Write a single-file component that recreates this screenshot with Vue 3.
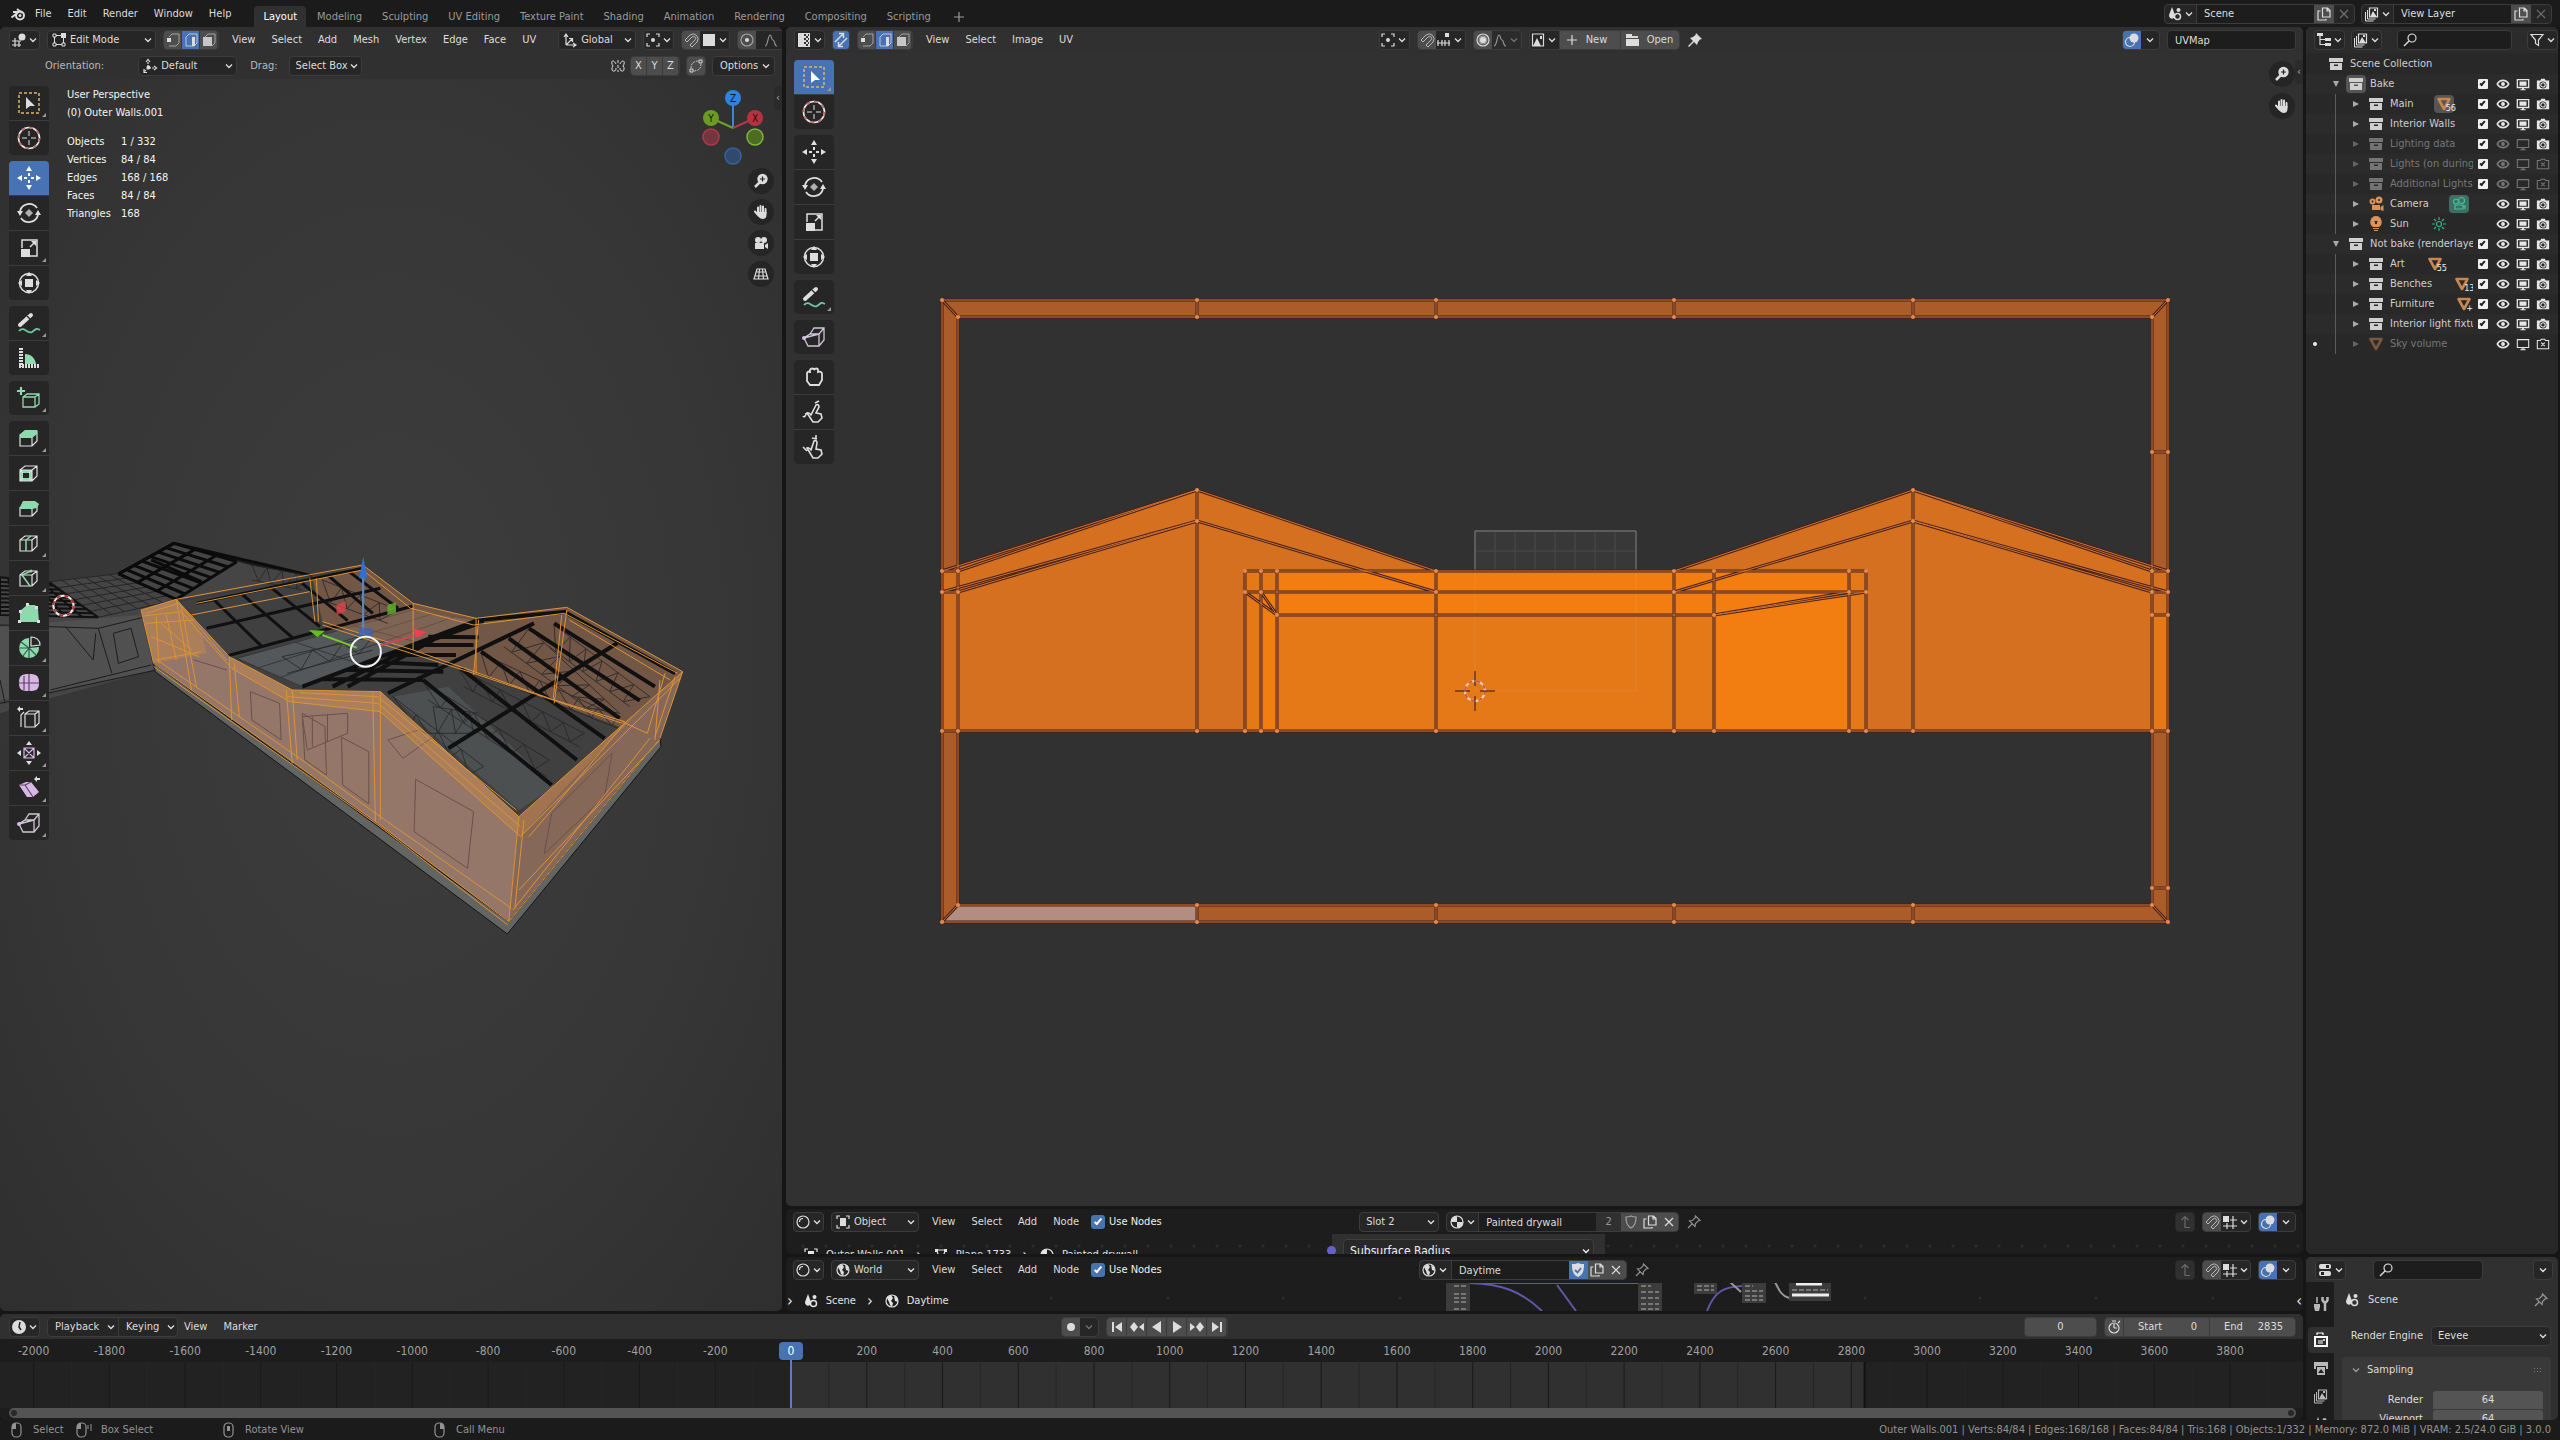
<script setup>
import { h } from 'vue'

const L = 'fill="none"'
const S = 'fill="none" stroke="currentColor"'
const F = 'fill="currentColor"'
const CUBE = 'M3 9l5-4h12v10l-5 5H3zM3 9h12v11M15 9l5-4'

const glyphs = {
  chev: `<path ${S} d="M4 6l4 4 4-4" stroke-width="1.800"/>`,
  blender: `<path ${S} stroke-width="2" d="M1.500 11.500L8 6.500M3 6h6M7 3l5 4"/><circle ${S} stroke-width="2" cx="10" cy="9.500" r="4"/><circle ${F} cx="10" cy="9.500" r="1.500"/>`,
  view3d: `<path ${S} d="M1 9h9M1 13h9M4 6v9M8 9v6"/><circle ${F} cx="11" cy="5" r="3.500"/>`,
  uvedit: `<path ${F} d="M2 1h12v14H2z"/><path fill="#222" d="M8 2h2v2H8zM12 2h1v2h-1zM10 4h2v2h-2zM8 6h2v2H8zM12 6h1v2h-1zM10 8h2v2h-2zM8 10h2v2H8zM12 10h1v2h-1zM10 12h2v2h-2z" opacity=".9"/>`,
  editmode: `<path ${S} d="M5 3.500h5M3.500 5v6M5 12.500h6M12.500 6v5" stroke-width="1"/><path ${S} stroke-width="1" d="M2 2h3v3H2zM2 11h3v3H2zM11 11h3v3h-3z"/><path ${F} d="M10 1h5v5h-5z"/>`,
  vert: `<path ${S} stroke-width="1" opacity=".6" d="M4 5l3-3h7v9l-3 3H4"/><path ${F} d="M2 6h4v4H2z"/>`,
  edge: `<path ${S} stroke-width="1" opacity=".8" d="M3 5l3-3h8v9l-3 3H3z"/><path ${F} d="M9 5h3v9H9z"/>`,
  face: `<path ${S} stroke-width="1" opacity=".6" d="M4 5l3-3h7v9l-3 3"/><path ${F} opacity=".85" d="M2 5h9v9H2z"/>`,
  axes: `<path ${S} d="M4 13V3M2 5l2-3 2 3M4 13h9M11 11l3 2-3 2M4 13l6-6M7 6.500h3.500V10"/>`,
  orient: `<path ${S} stroke-dasharray="2 1" d="M6 9V3M7 10h6M6 10l-4 4"/><path ${S} d="M4 4l2-2.500L8 4M12 8l2.500 2-2.500 2M2 11v3.500h3"/><circle ${F} cx="6.500" cy="9.500" r="2"/>`,
  pivot: `<path ${S} d="M2 5V2h3M11 2h3v3M14 11v3h-3M5 14H2v-3"/><circle ${F} cx="8" cy="8" r="2"/>`,
  magnet: `<path ${S} stroke-width="1" opacity=".75" d="M2 8l5-5a5 5 0 017 7l-5 5-2-2 5-5a2 2 0 00-3-3L4 10z"/>`,
  snapface: `<path ${F} d="M2 2h12v12H2z"/>`,
  snapinc: `<path ${S} d="M1 11h13M2 8v6M6 8v6M9 8v6M13 8v6"/><path ${F} d="M9 1h4v4H9z"/>`,
  snapgrid: `<path ${S} d="M1 12h14M8 6h7M5 9v6M11 2v13"/><path ${F} d="M1 2h6v6H1z"/>`,
  prop: `<circle ${S} opacity=".6" cx="8" cy="8" r="6"/><circle ${F} cx="8" cy="8" r="2"/>`,
  prop2: `<circle ${S} cx="8" cy="8" r="6"/><circle ${F} opacity=".5" cx="8" cy="8" r="4.500"/><circle ${F} cx="8" cy="8" r="3"/>`,
  falloff: `<path ${S} opacity=".6" d="M2 14c3 0 3-11 5-11s1 5 3 5 1 6 4 6"/>`,
  mirror: `<path ${S} stroke-width="1" d="M8 2v3M8 7v3M8 12v2M6 6C3 0 0 4 3 8c-2 2-1 6 1 5 2 0 2-2 2-3M10 6c3-6 6-2 3 2 2 2 1 6-1 5-2 0-2-2-2-3"/>`,
  automerge: `<path ${S} stroke-width="1" opacity=".8" stroke-dasharray="2 1" d="M3 10c0-5 3-7 8-7M13 6c0 5-3 7-8 7"/><path ${S} stroke-width="1" d="M2 11h3v3H2zM11 2h3v3h-3z"/>`,
  sync: `<path ${S} stroke-width="1.500" d="M2 10l8-8M6 1.500h4.500V6M14 6l-8 8M5.500 10v4.500H10"/>`,
  image: `<path ${S} d="M2.500 2h11v12h-11z"/><path ${F} d="M3 14l4-8 4 8zM10 4h2v3h-2z"/>`,
  plus: `<path ${S} d="M8 3v10M3 8h10"/>`,
  folder: `<path ${F} d="M1 2h6v2h6v2H1zM1 7h13v7H1z"/>`,
  pinfull: `<path ${F} d="M9 1l6 6-2 .5-2 2.500-1 3-3-3-5 5-1-1 5-5-3-3 3-1 2.500-2z"/>`,
  pin: `<path ${S} d="M9.500 2l4.500 4.500-2 .5-2.500 2.500-.5 3-5.500-5.500 3-.5L9 4zM6 10l-4 4"/>`,
  overlay: `<circle ${F} cx="10" cy="6" r="4.500"/><circle ${S} cx="6" cy="10" r="4.500"/>`,
  scene: `<path ${F} d="M5 1l3 8c0 5-6 5-6 0z"/><circle ${S} stroke-width="1.500" cx="10.500" cy="10.500" r="3"/><circle ${F} cx="11.500" cy="4" r="2"/>`,
  layers: `<path ${S} d="M5.500 2h8v9h-8z"/><path ${F} d="M6 11l3-6 4 6zM10 3h2v2h-2z"/><path ${S} stroke-width="1" d="M3.500 4v9h8M1.500 6v9h8"/>`,
  copy: `<path ${S} d="M6.500 2h5l2.500 2.500V11H6.500zM11 2v3h3M4.500 5H2v9h8v-1"/>`,
  x: `<path ${S} d="M4 4l8 8M12 4l-8 8"/>`,
  tree: `<path ${F} d="M1 1h6v3H1zM9 6h6v3H9zM9 11h6v3H9z"/><path ${S} d="M4 4v8.500h5M4 7.500h5"/>`,
  search: `<circle ${S} cx="10" cy="6" r="4"/><path ${S} stroke-width="1.500" d="M7 9l-5 5"/>`,
  filter: `<path ${S} d="M2 2.500h12L9.500 8v5.500l-3-2V8z"/>`,
  coll: `<path ${F} d="M1 2h14v4H1z"/><path ${F} fill-rule="evenodd" d="M2 7h12v7H2zM6 8.500v1.500h4V8.500z"/>`,
  eye: `<path ${S} stroke-width="1.800" d="M1.500 8c3-5.500 10-5.500 13 0-3 5.500-10 5.500-13 0z"/><circle ${F} cx="8" cy="8" r="2.200"/>`,
  screen: `<path ${S} stroke-width="1.500" d="M1.500 3h13v9h-13z"/><path ${F} d="M4 5h8v5H4zM5 14h6v1H5zM7 12h2v2H7z"/>`,
  screenoff: `<path ${S} d="M1.500 3h13v9h-13zM5 14.500h6M7 12v2M9 12v2"/>`,
  cam: `<path ${F} fill-rule="evenodd" d="M1 4h4l1-2h4l1 2h4v10H1zM8 5a4 4 0 100 8 4 4 0 000-8z"/><circle ${S} cx="8" cy="9" r="2.500"/>`,
  camoff: `<path ${S} d="M1.500 4H5l1-1.500h4L11 4h3.500v9.500h-13zM6 6.500l4 4M10 6.500l-4 4"/>`,
  movie: `<circle ${F} cx="4.500" cy="5.500" r="3"/><circle ${F} cx="11" cy="4" r="3.500"/><path ${F} d="M4 9h8v5H4zM12.500 11l3-2v6l-3-1z"/><circle cx="4.500" cy="5.500" r="1" fill="#282828"/><circle cx="11" cy="4" r="1" fill="#282828"/>`,
  movieo: `<circle ${S} cx="5" cy="5.500" r="2.500"/><circle ${S} cx="10.500" cy="4.500" r="3"/><path ${S} d="M4 9h8v4H4zM12 11l2-1v3"/>`,
  bulb: `<path ${F} fill-rule="evenodd" d="M8 0a6 6 0 00-3 11h6A6 6 0 008 0zM6 5l1 1v2h2V6l1-1"/><path ${S} d="M5 12.500h6M6 14.500h4"/>`,
  sun: `<circle ${S} cx="8" cy="8" r="2.500"/><path ${S} d="M8 1v3M8 12v3M1 8h3M12 8h3M3 3l2 2M11 11l2 2M13 3l-2 2M5 11l-2 2"/>`,
  mesh: `<path ${S} stroke-width="2.600" stroke-linejoin="round" d="M2.500 3h11L8 13z"/>`,
  shader: `<circle ${S} cx="8" cy="8" r="6"/><path ${S} d="M4.500 8A3.500 3.500 0 018 4.500"/>`,
  object: `<path ${S} d="M2 5V2h3M11 2h3v3M14 11v3h-3M5 14H2v-3"/><path ${F} d="M5 4h6v8H5z"/>`,
  world: `<circle ${S} cx="8" cy="8" r="6"/><path ${F} d="M3 5l4-3 2 3-2 3 2 2-1 4-2-2-1-3zM10 3l3 2 1 4-3-1z"/>`,
  material: `<circle ${S} cx="8" cy="8" r="6"/><path ${F} d="M8 2v6H2a6 6 0 016-6zM8 8h6a6 6 0 01-6 6z"/>`,
  meshdata: `<path ${S} d="M3 3h10M4 4l3 9M12 4L9 13"/><path ${F} d="M2 2h3v3H2zM11 2h3v3h-3z"/>`,
  shield: `<path ${S} d="M8 2c2 1 3 1 5 1 0 6-1 9-5 11C4 12 3 9 3 3c2 0 3 0 5-1z"/>`,
  shieldon: `<path ${F} d="M8 1c2 1 4 1 6 1 0 7-1 11-6 13C3 13 2 9 2 2c2 0 4 0 6-1z"/><path d="M5 8l2.500 2.500L11 6" stroke="#4772b3" stroke-width="1.800" fill="none"/>`,
  up: `<path ${S} d="M13 13.500H8V3M4.500 6L8 2.500 11.500 6"/>`,
  clock: `<circle ${F} cx="8" cy="8" r="7"/><path stroke="#222" stroke-width="1.500" fill="none" d="M9 3L8 8l2 3"/>`,
  stop: `<circle ${S} cx="8" cy="9" r="5"/><path ${S} d="M8 9V5M8 9h3M6 2h4M12 4l2-2"/>`,
  rec: `<circle ${F} cx="8" cy="8" r="4"/>`,
  first: `<path ${F} d="M3 3h2v10H3zM13 3v10L6 8z"/>`,
  prevkey: `<path ${F} d="M5 3l4 5-4 5-4-5zM15 4v8l-5-4z"/>`,
  playback: `<path ${F} d="M12 2v12L3 8z"/>`,
  play: `<path ${F} d="M4 2v12l9-6z"/>`,
  nextkey: `<path ${F} d="M11 3l4 5-4 5-4-5zM1 4v8l5-4z"/>`,
  last: `<path ${F} d="M11 3h2v10h-2zM3 3v10l7-5z"/>`,
  props: `<rect ${F} x="2" y="2" width="12" height="5" rx="2"/><rect ${F} x="2" y="9" width="12" height="5" rx="2"/><path fill="#222" d="M9 3h3v3H9zM4 10h3v3H4z"/>`,
  tools: `<path ${S} stroke-width="1.500" d="M4 1v6"/><path ${S} stroke-width="2.500" d="M12 7v8M9.500 1v3c1 3 4 3 5 0V1"/><path ${F} d="M1 8h6v3l-1 4H2l-1-4z"/>`,
  render: `<path ${F} fill-rule="evenodd" d="M1 4h14v11H1zM3 6v7h10V6z"/><path ${S} d="M4 3V1h6v2M5 9h5M5 11h5"/><circle ${F} cx="11" cy="8" r="1"/>`,
  output: `<path ${F} d="M1 2h14v7h-2V6H3v3H1zM4 7h8v8H4z"/><path fill="#222" d="M5 13l3-4 3 4z"/>`,
  mouseL: `<rect ${S} x="4" y="1" width="9" height="14" rx="4"/><path ${F} d="M4 7V5a4 4 0 014-4v6z"/>`,
  mouseM: `<rect ${S} x="4" y="1" width="9" height="14" rx="4"/><path ${F} d="M7 4h3v5H7z"/>`,
  mouseR: `<rect ${S} x="4" y="1" width="9" height="14" rx="4"/><path ${F} d="M13 7V5a4 4 0 00-4-4v6z"/>`,
  mouseD: `<rect ${S} x="1" y="1" width="9" height="14" rx="4"/><path ${F} d="M1 7V5a4 4 0 014-4v6z"/><path ${S} stroke-width="1" d="M12 3v4M15 2v7"/>`,
  zoomin: `<circle ${F} cx="9.500" cy="6" r="5.200"/><path ${S} stroke-width="2.500" d="M6.500 9.500L2 14"/><path stroke="#222" d="M9.500 3.500v5M7 6h5"/>`,
  hand: `<path ${S} stroke-width="2" stroke-linecap="round" d="M5 9V3.500M7.500 8V2M10 8V2.500M12.500 9V5M2 7.500l3.500 4"/><path ${F} d="M4 8h9.500v3c0 5-6 5-8.500 1z"/>`,
  camview: `<circle ${F} cx="5" cy="5" r="3"/><circle ${F} cx="11" cy="5" r="3"/><path ${F} d="M2 8h9v6H2zM12 10l3-2v6l-3-2z"/>`,
  persp: `<path ${S} d="M4 3h8l3 10H1zM3 6h10M2 10h12M6.500 3l-1 10M9.500 3l1 10"/>`,
}
const G = '#8fd9ae'
const P = '#d8b9e6'
const toolGlyphs = {
  select: `<path fill="none" stroke="#e0b46a" stroke-width="1.500" stroke-dasharray="3 2" d="M2 2h20v20H2z"/><path ${F} d="M9 6l9 9h-5l-4 3z"/>`,
  cursor: `<circle ${L} stroke="#e8e8e8" stroke-width="1.600" cx="12" cy="12" r="10.500"/><circle ${L} stroke="#c06a6a" stroke-width="1.600" stroke-dasharray="4 4.200" cx="12" cy="12" r="10.500"/><path ${S} stroke-width="1" d="M12 5v5M12 14v5M5 12h5M14 12h5"/>`,
  move: `<path ${F} d="M12 0l3 5H9zM12 24l3-5H9zM0 12l5-3v6zM24 12l-5-3v6z"/><path ${S} stroke-width="2" d="M12 7v3M12 14v3M7 12h3M14 12h3"/>`,
  rotate: `<path ${S} stroke-width="1.800" d="M3 10a9.500 9.500 0 0117-3M21 14a9.500 9.500 0 01-17 3"/><path ${F} d="M0 10h6l-3 5zM18 14h6l-3-5z"/><path ${F} opacity=".75" d="M12 8l4 4-4 4-4-4z"/>`,
  scale: `<path ${S} stroke-width="1.500" d="M5 12V4h15v16h-7M13 11l4-4"/><path ${F} d="M4 13h9v8H4zM19 5v5l-5-5z"/>`,
  transform: `<circle ${S} stroke-width="1.500" cx="12" cy="12" r="9.500"/><path ${F} d="M8 8h8v8H8zM12 1l3 4H9zM12 23l3-4H9zM1 12l4-3v6zM23 12l-4-3v6z"/>`,
  annotate: `<path ${S} stroke-width="4" stroke-linecap="round" d="M3 14L14 4"/><path stroke="#262626" d="M10 5l4 4"/><path fill="none" stroke="#6cc4a0" stroke-width="1.800" d="M2 20c5-6 9 4 13 1s4-4 8-2"/>`,
  measure: `<path fill="${G}" d="M8 18V8c6 0 10 4 11 10z"/><path ${S} stroke-width="4" stroke-dasharray="2 1" d="M4 2v19M2 20h21"/>`,
  addcube: `<path fill="none" stroke="${G}" stroke-width="1.300" d="M6 11l4-3h12v10l-4 3H6zM6 11h12v10M18 11l4-3"/><path ${L} stroke="${G}" stroke-width="2.200" d="M4 1v8M0 5h8"/>`,
  extrude: `<path ${S} d="${CUBE}"/><path fill="${G}" d="M3 9l5-5h12v4l-5 4H3z"/>`,
  inset: `<path fill="${G}" fill-rule="evenodd" d="M3 9h12v11H3zM6 12v5h6v-5z"/><path ${S} d="${CUBE}M3 9l3 3M15 9l-3 3M3 20l3-3M15 20l-3-3"/>`,
  bevel: `<path ${S} d="M3 11v9h12v-8M20 8v7l-5 5"/><path fill="${G}" d="M3 11l3-6h12l4 3-2 4-5 1H3z"/>`,
  loopcut: `<path ${S} d="${CUBE}"/><path fill="none" stroke="${G}" stroke-width="1.500" d="M9 20V9l5-4"/>`,
  knife: `<path ${S} d="${CUBE}"/><path fill="none" stroke="${G}" stroke-width="1.500" d="M14 5L5 9l8 11"/><circle fill="${G}" cx="14" cy="5" r="1.500"/>`,
  poly: `<path fill="${G}" d="M3 21V10l7-6h8l3 4 1 13z"/><path ${F} d="M1 19h3v3H1zM2 9h3v3H2zM9 2h3v3H9zM18 5h3v3h-3zM20 19h3v3h-3z"/>`,
  spin: `<path fill="${G}" d="M12 2v10l10-1a10 10 0 11-10-9z"/><path ${S} d="M14 10V1c5 0 9 3 9 8z"/><path stroke="#2d6046" d="M12 12L4 6M12 12H2M12 12l-6 8M12 12v10M12 12l7 7"/>`,
  smooth: `<path fill="${P}" d="M12 3c8 0 10 2 10 9s-3 8-10 8-10-1-10-8 2-9 10-9z"/><path stroke="#5c4468" fill="none" d="M2 12h20M12 3v17M7 5v14"/>`,
  slide: `<path ${S} d="M8 8l4-3h10v12l-4 4H8zM8 8h10v13M18 8l4-3M4 21V9l3-3"/><path ${F} d="M0 3l3-3v2h3v2H3v2z"/>`,
  shrink: `<path ${L} stroke="${P}" d="M7 7h10v10H7zM7 7l10 10M17 7L7 17"/><path ${F} d="M12 0l3 4H9zM12 24l3-4H9zM0 12l4-3v6zM24 12l-4-3v6z"/>`,
  shear: `<path fill="${P}" d="M2 9l7-3h5l8 10-6 5h-6z"/><path fill="none" stroke="#5c4468" d="M2 9h6l8 12M8 9l6-3"/><path ${F} d="M17 3l3-3v2h3v2h-3v2z"/>`,
  rip: `<path ${L} stroke="#cfc6d4" stroke-width="1.300" d="M8 9l4-6h10v12l-5 6H6L2 13l6-4h9v12M17 9l5-6M2 13l15-4"/><circle fill="${P}" cx="2" cy="13" r="2"/>`,
  grab: `<path ${S} stroke-width="1.800" d="M5 13V8c1-2 3-2 3 0V5c1-2 4-2 4 0 1-2 4-2 4 0v2c2-1 4 0 4 2v6l-3 5H8l-3-4z"/>`,
  relax: `<path ${S} stroke-width="1.600" d="M5 13c2-1 3 1 4 2l5-10c2-1 3 0 3 2l-3 6 5 1 1 4-4 4h-5zM1 16c1 2 3 0 3-3M13 3l4-2"/>`,
  pinch: `<path ${S} stroke-width="1.600" d="M5 13c2-1 3 1 4 2l3-9c2-1 3 0 3 2l-1 6 5 1 1 4-4 4h-5zM1 12l4 4M10 3l5 1M14 0v4"/>`,
}
const Icon = (p) => h('svg', { class: 'ico', viewBox: '0 0 16 16', 'stroke-width': 1.2, 'aria-hidden': 'true', innerHTML: glyphs[p.n] })
Icon.props = ['n']
const Tool = (p) => h('svg', { class: 'tico', viewBox: '0 0 24 24', 'stroke-width': 1.2, 'aria-hidden': 'true', innerHTML: toolGlyphs[p.n] })
Tool.props = ['n']

const menus = ['File', 'Edit', 'Render', 'Window', 'Help']
const tabs = ['Layout', 'Modeling', 'Sculpting', 'UV Editing', 'Texture Paint', 'Shading', 'Animation', 'Rendering', 'Compositing', 'Scripting']
const meshMenus = ['View', 'Select', 'Add', 'Mesh', 'Vertex', 'Edge', 'Face', 'UV']
const stats = [['Objects', '1 / 332'], ['Vertices', '84 / 84'], ['Edges', '168 / 168'], ['Faces', '84 / 84'], ['Triangles', '168']]
const viewTools = [
  ['select+', 'cursor'], ['move', 'rotate', 'scale+', 'transform'], ['annotate+', 'measure'], ['addcube+'],
  ['extrude+', 'inset', 'bevel', 'loopcut+', 'knife+', 'poly', 'spin+', 'smooth+', 'slide+', 'shrink+', 'shear+', 'rip+'],
]
const uvTools = [['select+', 'cursor'], ['move', 'rotate', 'scale', 'transform'], ['annotate+'], ['rip'], ['grab', 'relax', 'pinch']]
const toolSets = { view: { list: viewTools, on: 'move' }, uv: { list: uvTools, on: 'select+' } }

const row = (name, o = {}) => ({ name, depth: 2, icon: 'coll', check: true, screen: true, cam: true, ...o })
const rows = [
  row('Bake', { depth: 1, open: true, boxed: true }),
  row('Main', { badge: 'mesh', n: '56', hot: true }),
  row('Interior Walls'),
  row('Lighting data', { dim: true, screen: false }),
  row('Lights (on during bake)', { dim: true, screen: false, cam: false }),
  row('Additional Lights', { dim: true, screen: false, cam: false }),
  row('Camera', { icon: 'movie', check: false, badge: 'movieo', hot: true, orange: true }),
  row('Sun', { icon: 'bulb', check: false, badge: 'sun', orange: true }),
  row('Not bake (renderlayer)', { depth: 1, open: true }),
  row('Art', { badge: 'mesh', n: '55' }),
  row('Benches', { badge: 'mesh', n: '13' }),
  row('Furniture', { badge: 'mesh', n: '+99' }),
  row('Interior light fixtures'),
  row('Sky volume', { icon: 'mesh', dim: true, orange: true, check: false, screen: false, cam: false, eyeOn: true, dot: true }),
]

/* Timeline ruler: frame number to share of the width */
const at = (f) => ((791 + f * 0.3787) / 2303) * 100 + '%'
const labels = Array.from({ length: 30 }, (_, i) => -2000 + i * 200)
const ticks = Array.from({ length: 60 }, (_, i) => -2000 + i * 100)

/* UV layout */
const X = [942, 958, 1197, 1436, 1674, 1913, 2152, 2168]
const seg = (...p) => 'M' + p.join(' ')
const uvLines = [
  'M942 300H2168V922H942z', 'M958 317H2152V905H958z', 'M942 300L958 317M2168 300L2152 317M942 922L958 905M2168 922L2152 905',
  ...X.slice(2, 6).map((x) => `M${x} 300V317M${x} 905V922`),
  'M942 731H2168', 'M942 571L1197 490L1436 571', 'M958 571L1197 490', 'M942 592L1197 521L1436 592', 'M958 592L1197 521', 'M942 571H958M942 592H958',
  'M1674 571L1913 490L2168 571', 'M2152 571L1913 490', 'M1674 592L1913 521L2168 592', 'M2152 592L1913 521',
  'M1197 490V731M1436 571V731M1674 571V731M1913 490V731', 'M1245 571H1866M1245 592H1866M1277 615H1714',
  'M1245 571V731M1261 571V731M1277 571V731M1714 571V731M1849 571V731M1866 571V731',
  'M1245 592L1277 615M1261 592L1277 615', 'M1714 615L1849 592M1714 615L1866 592',
  'M2152 452H2168M2152 571H2168M2152 592H2168M2152 615H2168M2152 888H2168',
].join('')
const uvDots = [
  ...[942, 1197, 1436, 1674, 1913, 2168].flatMap((x) => [[x, 300], [x, 922]]),
  ...[958, 1197, 1436, 1674, 1913, 2152].flatMap((x) => [[x, 317], [x, 905]]),
  ...[942, 958, 1197, 1245, 1261, 1277, 1436, 1674, 1714, 1849, 1866, 1913, 2152, 2168].map((x) => [x, 731]),
  ...[942, 958, 1245, 1261, 1277, 1436, 1674, 1714, 1849, 1866, 2152, 2168].map((x) => [x, 571]),
  ...[942, 958, 1245, 1261, 1436, 1674, 1849, 1866, 2152, 2168].map((x) => [x, 592]),
  ...[452, 615, 888].flatMap((y) => [[2152, y], [2168, y]]),
  [1197, 490], [1913, 490], [1197, 521], [1913, 521], [1277, 615], [1714, 615],
]
const uvGrid = [1, 2, 3, 4, 5, 6, 7].map((i) => `M${1475 + i * 20} 531V691M1475 ${531 + i * 20}H1636`).join('')

/* Lines that divide a four-sided patch, a-b-c-d in order */
const mix = (p, q, t) => [p[0] + (q[0] - p[0]) * t, p[1] + (q[1] - p[1]) * t].map(Math.round)
const lattice = (a, b, c, d, nu, nv) => {
  let s = ''
  for (let i = 0; i <= nu; i++) s += seg(...mix(a, b, i / nu)) + 'L' + mix(d, c, i / nu).join(' ')
  for (let i = 0; i <= nv; i++) s += seg(...mix(a, d, i / nv)) + 'L' + mix(b, c, i / nv).join(' ')
  return s
}
/* Roof truss: two parallel chords a-b and d-c joined by a zigzag web */
const truss = (a, b, c, d, n) => {
  let s = seg(...a) + 'L' + b.join(' ') + seg(...d) + 'L' + c.join(' ') + seg(...a)
  for (let i = 1; i <= n; i++) s += 'L' + (i % 2 ? mix(d, c, i / n) : mix(a, b, i / n)).join(' ')
  return s
}
const farRoof = lattice([235, 222], [345, 130], [470, 185], [350, 298], 7, 3)
const farRoof2 = lattice([345, 130], [500, 195], [620, 228], [345, 130], 3, 8)
const farHall = lattice([100, 245], [240, 220], [350, 300], [195, 352], 6, 6)
const edgeRoof = lattice([0, 232], [95, 245], [195, 352], [0, 345], 6, 9)
const floorLines = lattice([470, 475], [820, 330], [945, 360], [600, 560], 3, 3)
const trusses = [
  truss([955, 460], [1225, 650], [1235, 690], [950, 520], 14), truss([1050, 385], [1230, 640], [1180, 640], [1000, 440], 12),
  truss([1100, 375], [1290, 590], [1250, 620], [1090, 440], 12), truss([910, 505], [1160, 700], [1150, 740], [920, 560], 12),
  truss([840, 545], [1090, 780], [1085, 830], [850, 600], 10), truss([780, 590], [960, 800], [950, 850], [800, 640], 8),
  truss([500, 195], [620, 228], [600, 270], [500, 240], 8), truss([640, 240], [790, 330], [770, 370], [640, 300], 8),
  truss([560, 470], [740, 410], [740, 450], [570, 520], 6), truss([860, 620], [950, 640], [940, 700], [850, 700], 5),
].join('')
</script>

<template>
  <div class="app">
    <header class="topbar">
      <Icon n="blender" class="logo" />
      <nav class="menus"><button v-for="m in menus" :key="m">{{ m }}</button></nav>
      <nav class="tabs">
        <button v-for="(t, i) in tabs" :key="t" :class="{ on: !i }">{{ t }}</button>
        <button aria-label="Add workspace"><Icon n="plus" /></button>
      </nav>
      <span class="grow"></span>
      <div v-for="s in [['scene', 'Scene'], ['layers', 'View Layer']]" :key="s[1]" class="box id">
        <button class="pick" :aria-label="s[1]"><Icon :n="s[0]" /><Icon n="chev" class="sm" /></button>
        <input class="name" :value="s[1]" :aria-label="s[1] + ' name'" />
        <button class="lit cell" aria-label="New"><Icon n="copy" /></button>
        <button class="cell faint" aria-label="Remove"><Icon n="x" /></button>
      </div>
    </header>

    <div class="body">
      <div class="main">
        <div class="work">
          <section class="area view3d">
            <svg class="canvas" viewBox="0 27 782 1284" aria-hidden="true">
              <g class="scene" transform="translate(0 500) scale(0.5038 0.3333)">
                <path fill="#454545" d="M0 235L100 245 240 218 345 130 620 228 360 300 280 330 305 510 100 595 0 640z" />
                <path fill="#505050" d="M0 380L195 355 280 345 305 510 100 575 0 600z" />
                <path class="ln" stroke="#1c1c1c" d="M0 375L195 385 290 350M195 385L222 520M0 610L305 512M100 570L300 495M130 380L185 480 190 400M225 400L260 385 275 470 235 490zM0 540L10 610" />
                <path class="ln" stroke="#262626" :d="farHall" />
                <path class="mid" stroke="#111" :d="edgeRoof" />
                <path class="ln" stroke="#1d1d1d" :d="farRoof2" />
                <path class="thick" stroke="#0b0b0b" :d="farRoof" />
                <path class="thick" stroke="#0b0b0b" d="M235 222L345 130 500 185 620 228M300 180L400 245" />
                <path fill="#404040" d="M360 305L720 195 820 310 945 355 1125 322 1355 515 1030 950 755 575 580 570 455 470z" />
                <path fill="#54585a" d="M470 475L820 325 945 360 600 562z" />
                <path fill="#4d5051" d="M780 590L890 745 1030 930 1100 860 890 560z" />
                <path class="ln" stroke="#222" opacity=".6" :d="floorLines" />
                <path fill="#b8754e" opacity=".42" d="M620 235L720 195 820 310 945 355 1125 322 1355 515 1230 680 945 520 820 450 640 365z" />
                <path class="ln" stroke="#262626" opacity=".8" :d="trusses" />
                <path class="beam" d="M410 385L755 265M390 310L720 205M425 300L520 440M480 282L580 412M540 265L635 380M600 250L690 362M650 225L740 340M690 212L790 325M450 468L820 318" />
                <path class="beam b2" d="M600 560L950 360M640 537L840 540M690 510L880 515M730 485L870 495M770 465L905 465M820 435L940 435M850 410L950 412M690 560L860 420M770 580L1060 370M820 440L960 365M660 560L820 440" />
                <path class="beam b2" d="M840 540L1095 855M915 505L1145 780M955 455L1200 715M1010 415L1230 655M1050 385L1270 602M1100 370L1300 560M890 745L1225 430M950 360L1125 335M1125 340L1340 520" />
                <path fill="#a07f6e" opacity=".88" d="M280 330L350 298 455 470 580 570 755 575 1030 950 1010 1265 750 970 585 790 305 490z" />
                <path fill="#8d6c5b" opacity=".92" d="M1030 950L1355 515 1310 715 1010 1265z" />
                <path fill="#626562" stroke="#151515" class="base" d="M305 490L1010 1265 1310 715 1312 740 1007 1302 308 515z" />
                <path class="ln" stroke="#6a5247" d="M825 838L940 935 928 1105 822 995zM678 712L732 755 732 912 680 855zM600 640L645 680 648 825 605 780zM497 575L555 610 558 720 500 660zM385 480L450 510M600 650L690 640 690 700 610 750zM770 720L830 690 860 710 800 775zM620 650L620 740M650 645L650 725M1215 760L1200 890 1080 1062 1095 940z" />
                <path fill="#e0913a" opacity=".3" d="M280 330L350 298 400 400 410 460 305 490zM455 470L580 570 755 575 1030 950 1033 1010 755 635 575 605 460 505zM1030 950L1355 515 1350 540 1290 600 1130 850 1033 1010z" />
                <path class="wire" d="M280 330L350 298 720 195 820 310 945 355 1125 322 1355 515 1310 715 1010 1265 750 970 585 790 305 490zM350 298L455 470 580 570 755 575 1030 950 1355 515M1030 950L1010 1265M1040 960L1022 1225" />
                <path class="wire" d="M285 348L360 335 460 505 575 605 755 635 1033 1010 1350 535M290 340L355 310 450 480M570 590L750 610 1033 980M595 578L750 590 1025 930M390 310L720 210 815 325 940 375 1120 340 1345 520" />
                <path class="wire" d="M350 298L380 570M360 320L390 560M455 470L460 660M465 490L475 650M568 570L580 790M580 570L590 780M740 580L745 965M755 575L755 960M310 480L400 455M320 370L380 450M290 370L385 360M300 410L395 470M310 350L315 490M330 345L350 480" />
                <path class="wire" d="M312 480L590 770 750 945 1015 1225M305 500L750 975 1008 1275M1320 520L1285 700 1235 665M1310 540L1300 720M1340 530L1300 710M1030 1170L1310 720M1018 1230L1290 715M1050 1010L1240 670" />
                <path class="wire" d="M615 235L625 365M628 235L632 365M820 310L820 450M945 355L945 520M950 360L940 525M1125 330L1100 610M1115 345L1098 600M640 365L820 450 1100 600 1240 665M640 375L940 520 1235 670M720 195L720 380M380 345L615 275 M1130 360L1330 540" />
                <path class="mid" stroke="#4b86d8" d="M721 230V400" /><path fill="#2f6fd6" d="M721 170L729 235H713z" /><path fill="#3465c0" opacity=".7" d="M712 385h28v25h-28z" />
                <path class="mid" stroke="#76c82f" d="M640 405L708 443" /><path fill="#5fbf1c" d="M613 390L645 392 630 412z" />
                <path class="mid" stroke="#d14455" d="M755 437L820 408" /><path fill="#ec3f52" d="M820 385L848 397 825 415z" />
                <path fill="#d9444f" opacity=".8" d="M668 315L686 303 686 335 668 345z" /><path fill="#5fae2a" opacity=".85" d="M769 315L786 307 786 338 769 345z" />
                <ellipse class="mid" stroke="#f2f2f2" cx="726" cy="455" rx="30" ry="45" />
                <ellipse class="mid" stroke="#eee" cx="126" cy="317" rx="20" ry="30" />
                <ellipse class="mid" stroke="#b43030" stroke-dasharray="4 4" cx="126" cy="317" rx="20" ry="30" />
              </g>
            </svg>
            <div class="head">
              <button class="box pick" aria-label="Editor type"><Icon n="view3d" /><Icon n="chev" class="sm" /></button>
              <span class="box drop w109"><Icon n="editmode" /><select aria-label="Mode"><option>Edit Mode</option></select><Icon n="chev" class="sm" /></span>
              <span class="box seg"><button aria-label="Vertex"><Icon n="vert" /></button><button class="on" aria-label="Edge"><Icon n="edge" /></button><button aria-label="Face"><Icon n="face" /></button></span>
              <nav class="menus"><button v-for="m in meshMenus" :key="m">{{ m }}</button></nav>
              <span class="grow"></span>
              <span class="box drop w78"><Icon n="axes" /><select aria-label="Transform orientation"><option>Global</option></select><Icon n="chev" class="sm" /></span>
              <button class="box pick" aria-label="Pivot point"><Icon n="pivot" /><Icon n="chev" class="sm" /></button>
              <span class="box"><button class="lit cell" aria-label="Snap"><Icon n="magnet" /></button><button class="pick" aria-label="Snap to"><Icon n="snapface" /><Icon n="chev" class="sm" /></button></span>
              <span class="box cut"><button class="lit cell" aria-label="Proportional editing"><Icon n="prop" /></button><button class="pick" aria-label="Falloff"><Icon n="falloff" /></button></span>
            </div>
            <div class="head second">
              <label for="ori" class="cap first">Orientation:</label>
              <span class="box drop w99"><Icon n="orient" /><select id="ori"><option>Default</option></select><Icon n="chev" class="sm" /></span>
              <label for="drag" class="cap">Drag:</label>
              <span class="box drop plain w73"><select id="drag"><option>Select Box</option></select><Icon n="chev" class="sm" /></span>
              <span class="grow"></span>
              <Icon n="mirror" />
              <span class="box seg tight"><button v-for="a in ['X', 'Y', 'Z']" :key="a">{{ a }}</button></span>
              <button class="box lit cell" aria-label="Auto merge"><Icon n="automerge" /></button>
              <button class="box opts">Options<Icon n="chev" class="sm" /></button>
            </div>
            <div class="stage">
              <div class="toolbar">
                <div v-for="(g, i) in toolSets.view.list" :key="i" class="tgroup">
                  <button v-for="t in g" :key="t" :class="{ on: t === toolSets.view.on, more: t.endsWith('+') }" :aria-label="t.replace('+', '')"><Tool :n="t.replace('+', '')" /></button>
                </div>
              </div>
              <div class="info">
                <p>User Perspective</p>
                <p>(0) Outer Walls.001</p>
                <dl><template v-for="s in stats" :key="s[0]"><dt>{{ s[0] }}</dt><dd>{{ s[1] }}</dd></template></dl>
              </div>
              <span class="grow"></span>
              <div class="navs">
                <svg class="gizmo" viewBox="0 0 66 78">
                  <path d="M33 39V10" stroke="#3b84dd" stroke-width="2" /><path d="M33 39L11 29" stroke="#6ea22c" stroke-width="2" /><path d="M33 39L55 29" stroke="#b2394a" stroke-width="2" />
                  <circle cx="11" cy="48" r="8" fill="#733640" stroke="#b2394a" stroke-width="1.500" /><circle cx="55" cy="48" r="8" fill="#4d6a26" stroke="#7db832" stroke-width="1.500" /><circle cx="33" cy="67" r="8" fill="#32496b" stroke="#3464a0" stroke-width="1.500" />
                  <circle cx="33" cy="9" r="8" fill="#2e83e2" /><circle cx="11" cy="29" r="8" fill="#6b9b22" /><circle cx="55" cy="29" r="8" fill="#b5323f" />
                  <text x="33" y="13">Z</text><text x="11" y="33">Y</text><text x="55" y="33">X</text>
                </svg>
                <button v-for="n in ['zoomin', 'hand', 'camview', 'persp']" :key="n" class="round" :aria-label="n"><Icon :n="n" /></button>
              </div>
              <button class="flap">‹</button>
            </div>
          </section>

          <div class="mid-col">
            <section class="area uv">
              <svg class="canvas" viewBox="786 27 1517 1179" aria-hidden="true">
                <path fill="#383838" stroke="#4c4c4c" d="M1475 531H1636V691H1475z" /><path fill="none" stroke="#4a4a4a" :d="uvGrid" /><path fill="none" stroke="#787878" d="M1475 571V531H1636V571" />
                <path fill="#ab5c28" fill-rule="evenodd" d="M942 300H2168V922H942zM958 317V905H2152V317z" />
                <path fill="#d4701f" d="M942 571L1197 490 1436 571H1674L1913 490 2168 571V731H942z" />
                <path fill="#e57917" d="M1245 571H1866V731H1245z" />
                <path fill="#f27e12" d="M1261 592H1277V731H1261zM1277 571H1849V592L1714 615H1277zM1714 615L1849 592V731H1714z" />
                <path fill="#e57917" d="M2152 615H2168V731H2152z" />
                <path fill="#b38d80" d="M942 922L958 905H1197V922z" />
                <path fill="none" stroke="#ffffff" stroke-opacity=".07" d="M1475 571V691H1636V571" />
                <path fill="none" stroke="#47201a" stroke-width="3" :d="uvLines" />
                <path fill="none" stroke="#cf7434" stroke-width="1" :d="uvLines" />
                <circle v-for="(d, i) in uvDots" :key="i" :cx="d[0]" :cy="d[1]" r="2" fill="#e88a4c" />
                <circle cx="1475" cy="691" r="10" fill="none" stroke="#f4d0b0" stroke-width="2" /><circle cx="1475" cy="691" r="10" fill="none" stroke="#d4543c" stroke-width="2" stroke-dasharray="4 4" />
                <path stroke="#2c1420" d="M1475 671V686M1475 696V711M1455 691H1470M1480 691H1495" />
              </svg>
              <div class="head">
                <button class="box pick" aria-label="Editor type"><Icon n="uvedit" /><Icon n="chev" class="sm" /></button>
                <button class="box cell sync blue" aria-label="Sync selection"><Icon n="sync" /></button>
                <span class="box seg"><button aria-label="Vertex"><Icon n="vert" /></button><button class="on" aria-label="Edge"><Icon n="edge" /></button><button aria-label="Face"><Icon n="face" /></button></span>
                <nav class="menus"><button v-for="m in ['View', 'Select', 'Image', 'UV']" :key="m">{{ m }}</button></nav>
                <span class="grow g7"></span>
                <button class="box pick" aria-label="Pivot point"><Icon n="pivot" /><Icon n="chev" class="sm" /></button>
                <span class="box"><button class="lit cell" aria-label="Snap"><Icon n="magnet" /></button><button class="pick" aria-label="Snap to"><Icon n="snapinc" /><Icon n="chev" class="sm" /></button></span>
                <span class="box faded"><button class="lit cell" aria-label="Proportional editing"><Icon n="prop2" /></button><button class="pick" aria-label="Falloff"><Icon n="falloff" /><Icon n="chev" class="sm faint" /></button></span>
                <span class="box"><button class="pick" aria-label="Image"><Icon n="image" /><Icon n="chev" class="sm" /></button><button class="lit word w61"><Icon n="plus" />New</button><button class="lit word w59"><Icon n="folder" />Open</button></span>
                <Icon n="pinfull" />
                <span class="grow g10"></span>
                <span class="box"><button class="blue cell" aria-label="Overlays"><Icon n="overlay" /></button><button class="cell" aria-label="Overlay options"><Icon n="chev" class="sm" /></button></span>
                <input class="box field w129" value="UVMap" aria-label="UV map" />
              </div>
              <div class="stage">
                <div class="toolbar">
                  <div v-for="(g, i) in toolSets.uv.list" :key="i" class="tgroup">
                    <button v-for="t in g" :key="t" :class="{ on: t === toolSets.uv.on, more: t.endsWith('+') }" :aria-label="t.replace('+', '')"><Tool :n="t.replace('+', '')" /></button>
                  </div>
                </div>
                <span class="grow"></span>
                <div class="navs"><button v-for="n in ['zoomin', 'hand']" :key="n" class="round" :aria-label="n"><Icon :n="n" /></button></div>
                <button class="flap">‹</button>
              </div>
            </section>

            <section class="area node n1">
              <div class="head">
                <button class="box pick" aria-label="Editor type"><Icon n="shader" /><Icon n="chev" class="sm" /></button>
                <span class="box drop w88"><Icon n="object" /><select aria-label="Shader type"><option>Object</option></select><Icon n="chev" class="sm" /></span>
                <nav class="menus"><button v-for="m in ['View', 'Select', 'Add', 'Node']" :key="m">{{ m }}</button></nav>
                <label class="use"><input type="checkbox" class="tick" checked />Use Nodes</label>
                <span class="grow g10"></span>
                <span class="box drop plain w80"><select aria-label="Slot"><option>Slot 2</option></select><Icon n="chev" class="sm" /></span>
                <span class="box id"><button class="pick" aria-label="Material"><Icon n="material" /><Icon n="chev" class="sm" /></button><input class="name" value="Painted drywall" aria-label="Material name" /><button class="lit users">2</button><button class="lit cell" aria-label="Fake user"><Icon n="shield" class="soft" /></button><button class="lit cell" aria-label="Copy"><Icon n="copy" /></button><button class="lit cell" aria-label="Unlink"><Icon n="x" /></button></span>
                <Icon n="pin" class="soft" />
                <span class="grow g25"></span>
                <button class="box cell lit faint" aria-label="Parent"><Icon n="up" /></button>
                <span class="box"><button class="lit cell" aria-label="Snap"><Icon n="magnet" /></button><button class="pick" aria-label="Snap to"><Icon n="snapgrid" /><Icon n="chev" class="sm" /></button></span>
                <span class="box"><button class="blue cell" aria-label="Overlays"><Icon n="overlay" /></button><button class="cell" aria-label="Overlay options"><Icon n="chev" class="sm" /></button></span>
              </div>
              <div class="dots">
                <p class="crumbs"><Icon n="object" />Outer Walls.001<i>›</i><Icon n="meshdata" />Plane.1733<i>›</i><Icon n="material" />Painted drywall</p>
                <div class="subsurf"><span class="socket"></span><span class="drop plain"><select aria-label="Subsurface radius"><option>Subsurface Radius</option></select><Icon n="chev" class="sm" /></span></div>
              </div>
            </section>

            <section class="area node n2">
              <svg class="links" viewBox="786 1282 1517 29" preserveAspectRatio="none" aria-hidden="true">
                <g fill="#3c3c3c"><path d="M1446 1282h24v29h-24zM1638 1282h24v29h-24zM1694 1282h23v12h-23zM1742 1282h24v21h-24zM1789 1282h42v19h-42z" /></g>
                <path stroke="#777" stroke-width="2" stroke-dasharray="5 2" d="M1454 1286h13M1454 1294h13M1454 1298h13M1454 1302h13M1454 1309h13M1641 1286h10M1641 1292h18M1641 1298h18M1641 1304h18M1641 1309h18M1697 1286h17M1697 1290h17M1745 1286h8M1745 1291h18M1745 1296h18M1745 1300h18M1792 1290h36" />
                <path stroke="#eee" stroke-width="3" d="M1796 1284h26M1792 1295h37" />
                <g fill="none" stroke="#5d59a8" stroke-width="2"><path d="M1470 1283H1638M1470 1283C1500 1284 1520 1290 1542 1311M1557 1285L1576 1311M1707 1311C1715 1290 1725 1287 1742 1286" /></g>
                <path fill="none" stroke="#999" stroke-width="2" d="M1730 1282L1741 1292M1775 1282C1780 1292 1782 1296 1789 1298" />
                <g fill="#2e2e2e"><circle v-for="x in [1051, 1168, 1283, 1400, 1865, 1980, 2096, 2213]" :key="x" :cx="x" cy="1298" r="1.500" /></g>
              </svg>
              <div class="head">
                <button class="box pick" aria-label="Editor type"><Icon n="shader" /><Icon n="chev" class="sm" /></button>
                <span class="box drop w88"><Icon n="world" /><select aria-label="Shader type"><option>World</option></select><Icon n="chev" class="sm" /></span>
                <nav class="menus"><button v-for="m in ['View', 'Select', 'Add', 'Node']" :key="m">{{ m }}</button></nav>
                <label class="use"><input type="checkbox" class="tick" checked />Use Nodes</label>
                <span class="grow g10"></span>
                <span class="box id"><button class="pick" aria-label="World"><Icon n="world" /><Icon n="chev" class="sm" /></button><input class="name" value="Daytime" aria-label="World name" /><button class="blue cell" aria-label="Fake user"><Icon n="shieldon" /></button><button class="lit cell" aria-label="Copy"><Icon n="copy" /></button><button class="lit cell" aria-label="Unlink"><Icon n="x" /></button></span>
                <Icon n="pin" class="soft" />
                <span class="grow g21"></span>
                <button class="box cell lit faint" aria-label="Parent"><Icon n="up" /></button>
                <span class="box"><button class="lit cell" aria-label="Snap"><Icon n="magnet" /></button><button class="pick" aria-label="Snap to"><Icon n="snapgrid" /><Icon n="chev" class="sm" /></button></span>
                <span class="box"><button class="blue cell" aria-label="Overlays"><Icon n="overlay" /></button><button class="cell" aria-label="Overlay options"><Icon n="chev" class="sm" /></button></span>
              </div>
              <p class="crumbs low"><i class="lead">›</i><Icon n="scene" />Scene<i>›</i><Icon n="world" />Daytime<span class="grow"></span><i class="lead">‹</i></p>
            </section>
          </div>
        </div>

        <section class="area timeline">
          <div class="head">
            <button class="box pick" aria-label="Editor type"><Icon n="clock" /><Icon n="chev" class="sm" /></button>
            <span class="box"><button class="word w70 split">Playback<Icon n="chev" class="sm" /></button><button class="word w59 split">Keying<Icon n="chev" class="sm" /></button></span>
            <nav class="menus near"><button>View</button><button>Marker</button></nav>
            <span class="grow g10"></span>
            <span class="box"><button class="lit cell" aria-label="Auto keying"><Icon n="rec" /></button><button class="cell faint" aria-label="Auto keying options"><Icon n="chev" class="sm" /></button></span>
            <span class="box seg wide"><button v-for="n in ['first', 'prevkey', 'playback', 'play', 'nextkey', 'last']" :key="n" :aria-label="n"><Icon :n="n" /></button></span>
            <span class="grow g10"></span>
            <input class="box num w73" value="0" aria-label="Current frame" />
            <span class="box">
              <button class="lit cell" aria-label="Preview range"><Icon n="stop" /></button>
              <label class="range">Start<input value="0" /></label>
              <label class="range">End<input value="2835" /></label>
            </span>
          </div>
          <svg class="ruler" width="100%" height="69">
            <rect width="100%" height="23" fill="#1d1d1d" />
            <rect y="23" width="100%" height="46" fill="#222" />
            <rect y="23" :x="at(0)" :width="(2835 * 0.3787 / 2303) * 100 + '%'" height="46" fill="#303030" />
            <line v-for="t in ticks" :key="t" :x1="at(t)" :x2="at(t)" y1="23" y2="69" :stroke="t % 200 ? '#272727' : '#1a1a1a'" />
            <line :x1="at(2835)" :x2="at(2835)" y1="23" y2="69" stroke="#111" stroke-width="2" />
            <text v-for="l in labels" :key="l" :x="at(l)" y="16">{{ l || '' }}</text>
            <line :x1="at(0)" :x2="at(0)" y1="10" y2="69" stroke="#5680c2" stroke-width="2" />
            <svg :x="at(0)" overflow="visible"><rect x="-12" y="3" width="24" height="18" rx="4" fill="#4772b3" /><text y="16" class="now">0</text></svg>
          </svg>
          <div class="scroll"><i></i><i></i></div>
        </section>
      </div>

      <aside class="side">
        <section class="area outliner">
          <div class="head">
            <button class="box pick" aria-label="Editor type"><Icon n="tree" /><Icon n="chev" class="sm" /></button>
            <button class="box pick" aria-label="Display mode"><Icon n="layers" /><Icon n="chev" class="sm" /></button>
            <label class="box search"><Icon n="search" /><input aria-label="Filter outliner" /></label>
            <button class="box pick" aria-label="Filter"><Icon n="filter" /><Icon n="chev" class="sm" /></button>
          </div>
          <ul class="rows">
            <li class="orow root"><Icon n="coll" />Scene Collection</li>
            <li v-for="r in rows" :key="r.name" class="orow" :class="{ kid: r.depth === 2, dim: r.dim }">
              <i v-if="r.dot" class="dot"></i>
              <span class="tree"><b :class="{ open: r.open }"></b><span class="gi" :class="{ boxed: r.boxed, orange: r.orange }"><Icon :n="r.icon" /></span><span class="nm">{{ r.name }}</span><span v-if="r.badge" class="badge" :class="[r.badge, { boxed: r.hot }]"><Icon :n="r.badge" /><small>{{ r.n }}</small></span></span>
              <span class="tg"><input v-if="r.check" type="checkbox" class="tick white" checked :aria-label="r.name" /></span>
              <span class="tg" :class="{ bright: r.eyeOn }"><Icon n="eye" /></span>
              <span class="tg" :class="{ bright: r.eyeOn }"><Icon :n="r.screen ? 'screen' : 'screenoff'" /></span>
              <span class="tg" :class="{ bright: r.cam || r.eyeOn }"><Icon :n="r.cam ? 'cam' : 'camoff'" /></span>
            </li>
          </ul>
        </section>
        <section class="area props">
          <div class="head">
            <button class="box pick" aria-label="Editor type"><Icon n="props" /><Icon n="chev" class="sm" /></button>
            <label class="box search"><Icon n="search" /><input aria-label="Search properties" /></label>
            <button class="box cell" aria-label="Options"><Icon n="chev" class="sm" /></button>
          </div>
          <div class="pbody">
            <nav class="ptabs"><button v-for="n in ['tools', 'render', 'output', 'layers', 'scene']" :key="n" :class="{ on: n === 'render' }" :aria-label="n"><Icon :n="n" /></button></nav>
            <div class="pcontent">
              <p class="prow"><Icon n="scene" />Scene<span class="grow"></span><Icon n="pin" class="soft" /></p>
              <div class="prow eng"><label for="eng">Render Engine</label><span class="box drop plain w120"><select id="eng"><option>Eevee</option></select><Icon n="chev" class="sm" /></span></div>
              <div class="panel">
                <p class="ptitle"><Icon n="chev" class="sm soft" />Sampling<span class="grow"></span><i class="grip"></i></p>
                <label class="pnum">Render<input value="64" /></label>
                <label class="pnum">Viewport<input value="64" /></label>
              </div>
            </div>
          </div>
        </section>
      </aside>
    </div>

    <footer class="status">
      <div class="hints">
        <span><Icon n="mouseL" />Select</span><span><Icon n="mouseD" />Box Select</span><span><Icon n="mouseM" />Rotate View</span><span><Icon n="mouseR" />Call Menu</span>
      </div>
      <span>Outer Walls.001 | Verts:84/84 | Edges:168/168 | Faces:84/84 | Tris:168 | Objects:1/332 | Memory: 872.0 MiB | VRAM: 2.5/24.0 GiB | 3.0.0</span>
    </footer>
  </div>
</template>

<style>
body { background: #161616; }
</style>

<style scoped>
.app { display: flex; flex-direction: column; height: 100vh; background: #161616; color: #dcdcdc; font: 11px/16px "DejaVu Sans Condensed", "DejaVu Sans", sans-serif; overflow: hidden; }
.app *, .app *::before, .app *::after { box-sizing: border-box; }
button, input, select { font: inherit; color: inherit; background: none; border: 0; padding: 0; margin: 0; outline: 0; }
p, ul, dl, dd { margin: 0; padding: 0; list-style: none; }
i { font-style: normal; }
.ico { width: 16px; height: 16px; flex: none; display: block; }
.ico.sm { width: 12px; height: 12px; }
.grow { flex: 1; }
.g7 { flex-grow: 7; } .g10 { flex-grow: 10; } .g21 { flex-grow: 21; } .g25 { flex-grow: 25; }
.faint { opacity: .4; }
.soft { opacity: .6; }

.topbar { height: 27px; flex: none; display: flex; align-items: center; padding: 0 8px 0 10px; background: #1b1b1b; }
.menus { display: flex; margin-left: -2px; }
.menus button { padding: 0 8px; height: 20px; }
.topbar .menus { margin-left: 1px; }
.tabs { display: flex; gap: 2px; margin-left: 15px; align-self: flex-end; height: 21px; color: #9a9a9a; }
.tabs button { padding: 0 9px; border-radius: 4px 4px 0 0; }
.tabs button.on { background: #303030; color: #fff; }
.box { display: flex; align-items: center; height: 20px; flex: none; background: #262626; border: 1px solid #3c3c3c; border-radius: 4px; overflow: hidden; }
.pick { display: flex; align-items: center; justify-content: center; width: 31px; height: 100%; flex: none; }
.box.pick { height: 20px; }
.cell { display: flex; align-items: center; justify-content: center; width: 19px; height: 100%; flex: none; }
.box.cell { height: 20px; width: 20px; }
.box.sync { width: 18px; }
.box:not(.id) > .pick { width: 29px; }
.box:not(.id) > .cell { width: 18px; }
.lit { background: #4d4d4d; }
.blue { background: #4772b3; }
.id .name { background: #1d1d1d; height: 100%; width: 118px; padding: 0 7px; border-left: 1px solid #3c3c3c; }
.id + .id { margin-left: 6px; }
.topbar .cell { width: 20px; }

.body { flex: 1; min-height: 0; display: flex; gap: 3px; }
.main { flex: 2303; min-width: 0; display: flex; flex-direction: column; gap: 3px; }
.work { flex: 1; min-height: 0; display: flex; gap: 4px; }
.side { flex: 252; min-width: 0; display: flex; flex-direction: column; gap: 3px; padding-right: 2px; }
.area { position: relative; border-radius: 5px; overflow: hidden; background: #303030; display: flex; flex-direction: column; }
.view3d { flex: 782; min-width: 0; background: radial-gradient(ellipse at 50% 50%, #3d3d3d 0%, #383838 50%, #2f2f2f 100%); }
.mid-col { flex: 1517; min-width: 0; display: flex; flex-direction: column; gap: 3px; }
.uv { flex: 1; min-height: 0; background: #313131; }
.canvas { position: absolute; inset: 0; width: 100%; height: 100%; }
.head { position: relative; display: flex; align-items: center; gap: 7px; height: 26px; flex: none; padding: 0 7px 0 9px; background: #303030; }
.view3d .head { padding-right: 0; }
.uv .head { padding-left: 8px; }
.view3d .second { padding: 0 7px 0 45px; gap: 6px; }
.cap { margin: 0 5px 0 7px; color: #b8b8b8; }
.cap.first { margin: 0 28px 0 0; }
.cut { width: 46px; border-radius: 4px 0 0 4px; }
.opts { justify-content: space-between; width: 63px; padding: 0 2px 0 7px; }
.drop { display: flex; align-items: center; gap: 3px; padding: 0 1px 0 3px; }
.drop select { flex: 1; min-width: 0; appearance: none; }
.plain { padding-left: 6px; gap: 0; }
.w109 { width: 109px; } .w78 { width: 78px; } .w99 { width: 99px; } .w73 { width: 73px; } .w88 { width: 88px; } .w80 { width: 80px; } .w120 { width: 120px; } .w129 { width: 129px; } .w61 { width: 61px; } .w59 { width: 59px; } .w70 { width: 70px; }
.seg button { width: 18px; height: 100%; display: flex; align-items: center; justify-content: center; background: #4d4d4d; border-right: 1px solid #3a3a3a; }
.seg .on { background: #4772b3; }
.seg.tight button { width: 16px; }
.seg.tight { margin-left: -2px; }
.seg.wide button { width: 20px; }
.word { display: flex; align-items: center; gap: 6px; height: 100%; padding: 0 4px; border-left: 1px solid #3c3c3c; }
.split { justify-content: space-between; padding: 0 1px 0 7px; }
.split:first-child { border-left: 0; }
.field { padding: 0 7px; background: #1d1d1d; }
.faded { background: #2b2b2b; }

.stage { position: relative; display: flex; align-items: flex-start; flex: 1; min-height: 0; padding: 7px 0 0 9px; }
.uv .stage { padding-left: 8px; }
.toolbar { display: flex; flex-direction: column; gap: 6px; width: 40px; }
.tgroup { display: flex; flex-direction: column; gap: 1px; border-radius: 4px; overflow: hidden; background: #3c3c3c; }
.tgroup button { position: relative; height: 34px; background: #262626; color: #dedede; display: flex; align-items: center; justify-content: center; }
.tgroup .on { background: #4772b3; color: #fff; }
.tgroup .more::after { content: ""; position: absolute; right: 3px; bottom: 3px; border: 2px solid transparent; border-right-color: #999; border-bottom-color: #999; }
.tico { width: 24px; height: 24px; }
.info { padding-left: 18px; line-height: 18px; color: #f4f4f4; }
.info dl { display: grid; grid-template-columns: 54px auto; margin-top: 11px; }
.navs { display: flex; flex-direction: column; align-items: flex-end; gap: 5px; padding: 3px 7px 0 0; }
.uv .navs { padding: 1px 0 0; gap: 6px; }
.gizmo { width: 66px; height: 78px; margin: 0 8px -4px 0; }
.gizmo text { font-size: 10px; text-anchor: middle; fill: #111; }
.round { width: 26px; height: 26px; border-radius: 50%; background: #252525; display: flex; align-items: center; justify-content: center; }
.flap { position: relative; width: 8px; height: 24px; border-radius: 4px 0 0 4px; background: #2a2a2a; color: #aaa; }
.view3d .flap { margin-left: -7px; }

.scene path, .scene ellipse { vector-effect: non-scaling-stroke; }
.ln { stroke-width: 1; fill: none; }
.base { stroke-width: 1; }
.mid { stroke-width: 2; fill: none; }
.thick { stroke-width: 3; fill: none; }
.beam { stroke: #101010; stroke-width: 3; fill: none; }
.b2 { stroke-width: 4; }
.wire { stroke: #df9235; stroke-width: 1; fill: none; }

.node { background: #1d1d1d; }
.node .head { background: #1d1d1d; padding-left: 7px; }
.n1 { height: 45px; flex: none; }
.n2 { height: 54px; flex: none; }
.use { display: flex; align-items: center; gap: 4px; margin-left: -3px; color: #f0f0f0; }
.tick { appearance: none; position: relative; width: 14px; height: 14px; border-radius: 3px; background: #4772b3; flex: none; }
.tick::after { content: ""; position: absolute; left: 5px; top: 2px; width: 4px; height: 8px; border: solid #fff; border-width: 0 2px 2px 0; rotate: 40deg; }
.tick.white { width: 10px; height: 10px; border-radius: 1px; background: #f0f0f0; }
.tick.white::after { left: 3px; top: 1px; width: 3px; height: 6px; border-color: #222; }
.users { width: 25px; height: 100%; color: #999; background: #303030; }
.dots { position: relative; flex: 1; background: radial-gradient(circle at 12px 11px, #2d2d2d 1px, transparent 2px) 5px 0 / 23px 23px repeat-x; }
.crumbs { display: flex; align-items: center; gap: 7px; padding: 12px 0 0 17px; color: #e4e4e4; }
.crumbs i { font-size: 16px; padding: 0 4px; }
.crumbs.low { position: relative; flex: 1; padding: 8px 0 0 0; }
.crumbs .lead { padding: 0 1px; }
.crumbs.low .lead + .ico { margin-left: 2px; }
.subsurf { position: absolute; left: 36%; top: -1px; width: 18%; height: 30px; padding: 5px 11px 0; background: #303030; font-size: 12px; }
.subsurf .drop { height: 24px; background: #282828; border: 1px solid #3f3f3f; border-radius: 4px; color: #f0f0f0; }
.socket { position: absolute; left: -5px; top: 12px; width: 9px; height: 9px; border-radius: 50%; background: #6363c7; }
.links { position: absolute; left: 0; bottom: 0; width: 100%; height: 29px; }

.timeline { height: 106px; flex: none; background: #1d1d1d; }
.timeline .head { height: 25px; }
.near { margin-left: -9px; }
.num { background: #4d4d4d; text-align: center; }
.range { display: flex; align-items: center; justify-content: space-between; width: 86px; height: 100%; padding: 0 12px 0 14px; background: #4d4d4d; border-left: 1px solid #3a3a3a; }
.range input { width: 32px; text-align: right; }
.ruler { display: block; }
.ruler text { font-size: 12px; fill: #a0a0a0; text-anchor: middle; }
.ruler .now { fill: #fff; }
.scroll { margin: 0 7px 0 9px; height: 10px; border-radius: 5px; background: #545454; display: flex; justify-content: space-between; align-items: center; padding: 0 2px; }
.scroll i { width: 6px; height: 6px; border-radius: 50%; background: #282828; }

.outliner { flex: 1; min-height: 0; background: #282828; }
.outliner .head { background: #2b2b2b; gap: 6px; padding: 0 0 0 8px; }
.search { background: #1d1d1d; flex: 1; padding-left: 4px; min-width: 0; margin: 0 9px; }
.search input { width: 100%; min-width: 0; }
.rows { padding-top: 1px; color: #cfcfcf; }
.orow { position: relative; display: flex; align-items: center; height: 20px; padding: 0 5px 0 20px; }
.orow:nth-child(even) { background: #2b2b2b; }
.root { padding-left: 22px; gap: 6px; }
.kid { padding-left: 40px; }
.kid::before { content: ""; position: absolute; left: 29px; top: 0; width: 1px; height: 20px; background: #5c5c5c; }
.tree { flex: 1; min-width: 0; display: flex; align-items: center; overflow: hidden; white-space: nowrap; }
.tree b { width: 20px; flex: none; display: flex; justify-content: center; }
.tree b::before { content: ""; border: 3px solid transparent; border-left: 6px solid #aaa; border-right: 0; }
.tree b.open::before { border: 3px solid transparent; border-top: 6px solid #aaa; border-bottom: 0; }
.gi, .badge { width: 20px; height: 18px; flex: none; display: flex; align-items: center; justify-content: center; border-radius: 4px; }
.nm { padding-left: 4px; }
.boxed { background: #555; }
.orange { color: #d9925c; }
.badge { position: relative; margin-left: 20px; color: #c98650; }
.badge small { position: absolute; left: 12px; top: 7px; font-size: 9px; line-height: 12px; color: #f0f0f0; }
.badge.movieo { color: #3fc39b; background: #3f6f62; }
.badge.sun { color: #2fb58e; }
.tg { width: 20px; display: flex; justify-content: center; color: #e6e6e6; }
.tg .ico { width: 14px; height: 14px; }
.dim .nm, .dim .tg { color: #777; }
.dim b, .dim .gi { opacity: .45; }
.dim .bright { color: #e6e6e6; }
.dot { position: absolute; left: 7px; top: 8px; width: 4px; height: 4px; border-radius: 50%; background: #eee; }

.props { height: 163px; flex: none; }
.props .head { height: 25px; padding-right: 5px; }
.props .search { flex: 1; margin: 0 43px 0 20px; }
.pbody { display: flex; flex: 1; min-height: 0; }
.ptabs { width: 28px; background: #1d1d1d; display: flex; flex-direction: column; gap: 2px; padding: 9px 0 0 2px; overflow: hidden; color: #b8b8b8; flex: none; }
.ptabs button { height: 26px; flex: none; display: flex; align-items: center; justify-content: center; border-radius: 4px 0 0 4px; }
.ptabs button:nth-child(2) { margin-top: 8px; }
.ptabs .on { background: #303030; color: #fff; }
.pcontent { flex: 1; min-width: 0; padding: 8px 7px 0 8px; }
.prow { display: flex; align-items: center; gap: 8px; height: 20px; padding: 0 2px; }
.eng { margin: 16px 0 11px; padding: 0; justify-content: flex-end; }
.panel { background: #393939; border-radius: 4px; padding: 4px 8px 0; height: 90px; }
.ptitle { display: flex; align-items: center; gap: 5px; height: 18px; }
.grip { width: 10px; height: 6px; background: radial-gradient(circle, #777 1px, transparent 1px) 0 0 / 3px 3px; }
.pnum { display: flex; align-items: center; justify-content: flex-end; gap: 10px; height: 19px; }
.ptitle + .pnum { margin-top: 11px; }
.pnum input { width: 110px; height: 18px; background: #545454; text-align: center; border-radius: 3px 3px 0 0; }

.status { height: 20px; flex: none; display: flex; align-items: center; justify-content: space-between; padding: 0 9px 0 8px; background: #1b1b1b; color: #939393; }
.hints { display: grid; grid-template-columns: 68px 144px 211px auto; }
.hints span { display: flex; align-items: center; gap: 9px; }
</style>
